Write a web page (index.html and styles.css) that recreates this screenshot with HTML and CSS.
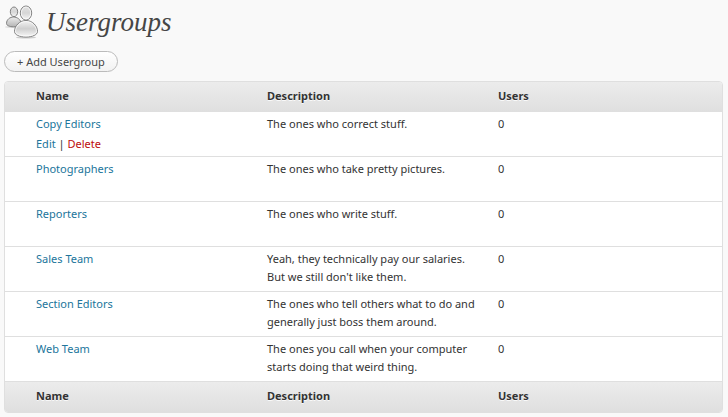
FILE: index.html
```html
<!DOCTYPE html>
<html lang="en">
<head>
<meta charset="utf-8">
<title>Usergroups</title>
<link rel="stylesheet" href="styles.css">
</head>
<body>
<header class="page-header">
  <svg class="page-icon" viewBox="0 1 34 34" aria-hidden="true">
    <defs>
      <linearGradient id="head" x1="0" y1="0" x2="0" y2="1">
        <stop offset="0" stop-color="#e2e2e2"/><stop offset="0.5" stop-color="#d6d6d6"/><stop offset="1" stop-color="#f6f6f6"/>
      </linearGradient>
      <linearGradient id="body" x1="0" y1="0" x2="0" y2="1">
        <stop offset="0" stop-color="#f4f4f4"/><stop offset="0.5" stop-color="#cfcfcf"/><stop offset="1" stop-color="#f8f8f8"/>
      </linearGradient>
      <linearGradient id="back" x1="0" y1="0" x2="0" y2="1">
        <stop offset="0" stop-color="#ededed"/><stop offset="1" stop-color="#b4b4b4"/>
      </linearGradient>
    </defs>
    <ellipse cx="9" cy="23" rx="8" ry="1" fill="#ddd"/>
    <ellipse cx="22" cy="33.500" rx="10" ry="1" fill="#ccc"/>
    <g stroke="#808080" stroke-width="1">
      <path d="M2.500 19.500C2.500 15.500 6 13 9.500 13s7.500 2.500 7.500 6.500c0 2-3.500 3.300-7.500 3.300s-7-1.300-7-3.300z" fill="url(#back)"/>
      <ellipse cx="10" cy="7.800" rx="3.700" ry="4.800" fill="url(#head)"/>
      <path d="M10.500 27.500C10.500 22 15.500 16.500 22 16.500S33.500 22 33.500 27.500c0 3.200-5 5.500-11.500 5.500s-11.500-2.300-11.500-5.500z" fill="url(#body)"/>
      <ellipse cx="22" cy="9" rx="5.700" ry="7" fill="url(#head)"/>
    </g>
    <ellipse cx="22" cy="9" rx="4.700" ry="6" fill="none" stroke="#fff" stroke-opacity="0.700"/>
    <path d="M11.500 27.500C11.500 22.500 16 17.500 22 17.500S32.500 22.500 32.500 27.500c0 2.300-4.500 4.500-10.500 4.500s-10.500-2.200-10.500-4.500z" fill="none" stroke="#fff" stroke-opacity="0.700"/>
  </svg>
  <h1 class="page-title">Usergroups</h1>
</header>
<button class="add-button" type="button">+ Add Usergroup</button>
<table class="groups">
  <colgroup><col class="col-check"><col><col><col></colgroup>
  <thead>
    <tr><td></td><th scope="col">Name</th><th scope="col">Description</th><th scope="col">Users</th></tr>
  </thead>
  <tbody>
    <tr><td></td><td><a href="#copy-editors">Copy Editors</a>
      <div class="row-actions"><a href="#edit">Edit</a> | <a class="delete" href="#delete">Delete</a></div></td>
      <td>The ones who correct stuff.</td><td>0</td></tr>
    <tr><td></td><td><a href="#photographers">Photographers</a></td><td>The ones who take pretty pictures.</td><td>0</td></tr>
    <tr><td></td><td><a href="#reporters">Reporters</a></td><td>The ones who write stuff.</td><td>0</td></tr>
    <tr><td></td><td><a href="#sales-team">Sales Team</a></td><td>Yeah, they technically pay our salaries. But we still don't like them.</td><td>0</td></tr>
    <tr><td></td><td><a href="#section-editors">Section Editors</a></td><td>The ones who tell others what to do and generally just boss them around.</td><td>0</td></tr>
    <tr><td></td><td><a href="#web-team">Web Team</a></td><td>The ones you call when your computer starts doing that weird thing.</td><td>0</td></tr>
  </tbody>
  <tfoot>
    <tr><td></td><th scope="col">Name</th><th scope="col">Description</th><th scope="col">Users</th></tr>
  </tfoot>
</table>
</body>
</html>
```
FILE: styles.css
```css
* {
  box-sizing: border-box;
}

body {
  margin: 0;
  padding: 5px 5px 4px 4px;
  background: #f9f9f9;
  color: #333;
  font: 11px/18px "Lucida Grande", "Noto Sans", sans-serif;
}

a {
  color: #21759b;
  text-decoration: none;
}

.page-header {
  display: flex;
  align-items: center;
  gap: 8px;
  height: 34px;
}

.page-icon {
  width: 34px;
  height: 34px;
}

.page-title {
  margin: 0;
  color: #464646;
  font: italic 27px/34px "Liberation Serif", serif;
}

.add-button {
  display: block;
  height: 21px;
  margin: 12px 0 9px;
  padding: 0 12px;
  border: 1px solid #bbb;
  border-radius: 11px;
  background: linear-gradient(#fff, #f2f2f2);
  color: #464646;
  font: inherit;
  line-height: 18px;
}

.groups {
  width: 100%;
  table-layout: fixed;
  border: 1px solid #dfdfdf;
  border-radius: 4px;
  border-spacing: 0;
  background: #fff;
  overflow: hidden;
}

.col-check {
  width: 24px;
}

.groups th,
.groups td {
  padding: 3px 7px;
  text-align: left;
  vertical-align: top;
}

.groups tbody td {
  height: 45px;
  border-bottom: 1px solid #dfdfdf;
}

.groups thead tr,
.groups tfoot tr {
  height: 30px;
  background: linear-gradient(#ececec, #dfdfdf);
}

.groups thead th,
.groups tfoot th {
  padding: 5px 7px 7px;
  text-shadow: 0 1px 0 rgba(255, 255, 255, 0.8);
}

.row-actions {
  padding-top: 2px;
}

.row-actions .delete {
  color: #bc0b0b;
}
```
